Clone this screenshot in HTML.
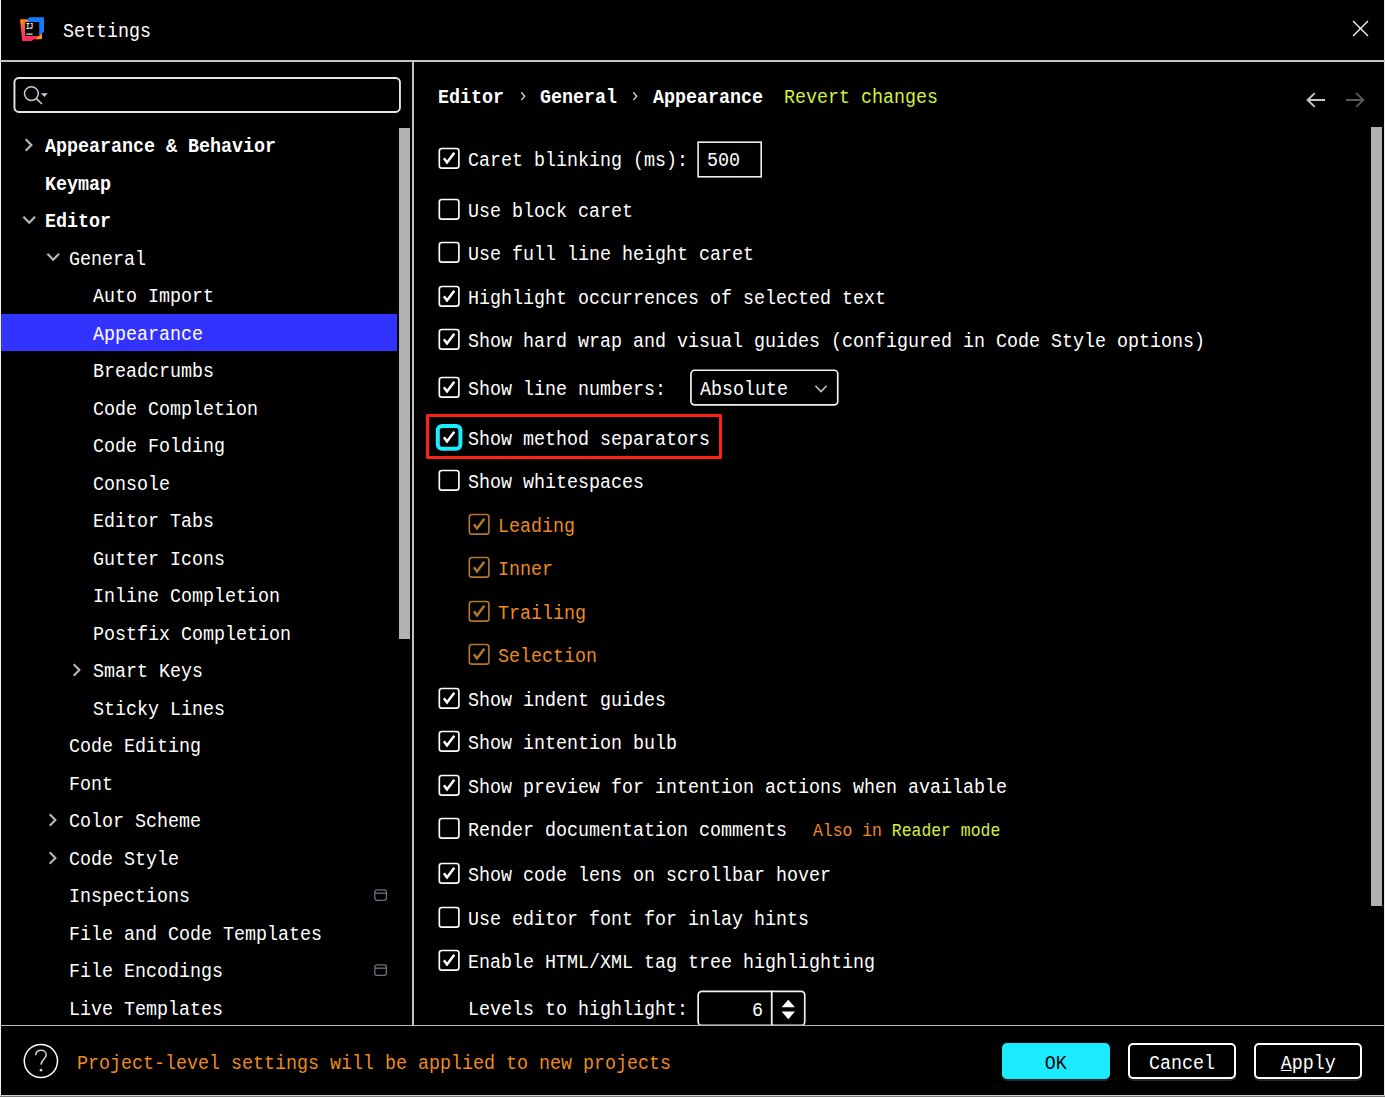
<!DOCTYPE html>
<html lang="en"><head><meta charset="utf-8"><title>Settings</title>
<style>
*{box-sizing:border-box;margin:0;padding:0}
html,body{width:1385px;height:1097px;background:#000;overflow:hidden}
body{position:relative;font-family:"Liberation Mono","DejaVu Sans Mono",monospace;font-size:19.5px;letter-spacing:0px;color:#fff;line-height:24px;-webkit-font-smoothing:antialiased}
.a{position:absolute}
.t{position:absolute;white-space:pre;height:24px;line-height:24px;transform:scaleX(0.94);transform-origin:0 0}
.btn span.s{display:inline-block;transform:scaleX(0.94);transform-origin:center}
.t{margin-left:-0.7px}
.b{font-weight:bold;margin-left:0}
.o{color:#ea8b22}
.g{color:#d2f23c}
.ln{position:absolute;background:#bdbdbd}
.cb{position:absolute;width:21px;height:21px;border:1.5px solid #fff;border-radius:3.5px}
.cb svg,.cbf svg{position:absolute;left:0;top:0}
.cbo{border-color:#a86a2a}
.cbf{position:absolute;width:27px;height:27px;border:4px solid #1aebff;border-radius:6px;background:#000}
.row{position:absolute;left:1px;width:396px;height:37px}
.btn{position:absolute;top:1043px;width:108px;height:36px;border-radius:5px;border:2px solid #fff;box-shadow:0 2px 0 #262626;text-align:center;line-height:38px}
</style></head><body>

<div class="ln" style="left:0;top:0;width:1px;height:1097px;background:#f2f2f2"></div>
<div class="ln" style="left:1384px;top:0;width:1px;height:1097px;background:#ececec"></div>
<div class="ln" style="left:0;top:1095px;width:1385px;height:1px;background:#d0d0d0"></div>
<div class="ln" style="left:0;top:1096px;width:1385px;height:1px;background:#7a7a7a"></div>
<div class="ln" style="left:0;top:60px;width:1385px;height:2px;background:#c6c6c6"></div>
<div class="ln" style="left:412px;top:62px;width:2px;height:963px;background:#c2c2c2"></div>
<div class="ln" style="left:0;top:1025px;width:1385px;height:1px;background:#bababa;z-index:3"></div>
<div class="a" style="left:1px;top:1026px;width:1383px;height:3px;background:#000;z-index:2"></div>
<svg class="a" style="left:20px;top:17px" width="24" height="24" viewBox="0 0 24 24">
<defs>
<linearGradient id="g1" x1="0.1" y1="0" x2="0.45" y2="1"><stop offset="0" stop-color="#ff8a12"/><stop offset="0.45" stop-color="#ff4a4a"/><stop offset="1" stop-color="#ff2368"/></linearGradient>
<linearGradient id="g2" x1="0.9" y1="0" x2="0.35" y2="1"><stop offset="0" stop-color="#0a84ff"/><stop offset="0.6" stop-color="#1878ff"/><stop offset="1" stop-color="#7a5ad8"/></linearGradient>
</defs>
<path d="M14.2 22.2 L21.2 22.2 Q22 22.2 22 21.4 L22 16 Z" fill="#ff8a10"/>
<path d="M1 2.3 L8 2.3 L22 16.6 L11.6 24 L3 24 Q2.2 24 2.1 23.2 L0.1 3.3 Q0 2.3 1 2.3 Z" fill="url(#g1)"/>
<path d="M9.6 0.2 L22.8 0.2 Q24 0.2 24 1.4 L24 14.2 Q24 14.9 23.4 15.3 L19.2 18.4 L7.4 3.4 L8.6 0.8 Q8.9 0.2 9.6 0.2 Z" fill="url(#g2)"/>
<rect x="5" y="5" width="14.2" height="14" fill="#000"/>
<rect x="6.3" y="16.4" width="6.3" height="1.5" fill="#c4c4c4"/>
<text x="6" y="12" font-family="Liberation Mono,monospace" font-weight="bold" font-size="8.6" textLength="7.2" lengthAdjust="spacingAndGlyphs" fill="#fff">IJ</text>
</svg>
<div class="t" style="left:63.3px;top:19.6px">Settings</div>
<svg class="a" style="left:1351px;top:19px" width="19" height="19" viewBox="0 0 19 19"><path d="M2 2 L17 17 M17 2 L2 17" stroke="#fff" stroke-width="1.3" fill="none"/></svg>
<svg class="a" style="left:11px;top:75px" width="393" height="41" viewBox="0 0 393 41"><rect x="3.45" y="2.95" width="385.50" height="34.00" rx="4.40" fill="none" stroke="#e6e6e6" stroke-width="1.90"/></svg>
<svg class="a" style="left:20px;top:82px" width="32" height="26" viewBox="0 0 32 26">
<circle cx="11.4" cy="11.6" r="6.9" fill="none" stroke="#c8cad0" stroke-width="1.5"/>
<path d="M16.4 16.6 L22 22" stroke="#c8cad0" stroke-width="1.6" fill="none"/>
<path d="M20.9 11.2 L27.8 11.2 L24.35 15 Z" fill="#c8cad0"/>
</svg>
<div class="row" style="top:314px;background:#3333ff"></div>
<svg class="a" style="left:23.40px;top:137.35px" width="12" height="16" viewBox="0 0 12 16"><path d="M2.7 2.2 L8.4 8 L2.7 13.8" fill="none" stroke="#b6b8ba" stroke-width="2.1"/></svg>
<div class="t b" style="left:45px;top:134.8px">Appearance &amp; Behavior</div>
<div class="t b" style="left:45px;top:172.8px">Keymap</div>
<svg class="a" style="left:21.15px;top:213.90px" width="17" height="12" viewBox="0 0 17 12"><path d="M2.4 2.75 L8.2 8.73 L14 2.75" fill="none" stroke="#b6b8ba" stroke-width="2.1"/></svg>
<div class="t b" style="left:45px;top:209.8px">Editor</div>
<svg class="a" style="left:45.10px;top:251.40px" width="17" height="12" viewBox="0 0 17 12"><path d="M2.4 2.75 L8.2 8.73 L14 2.75" fill="none" stroke="#b6b8ba" stroke-width="2.1"/></svg>
<div class="t" style="left:70px;top:247.8px">General</div>
<div class="t" style="left:94px;top:284.8px">Auto Import</div>
<div class="t" style="left:94px;top:322.8px">Appearance</div>
<div class="t" style="left:94px;top:359.8px">Breadcrumbs</div>
<div class="t" style="left:94px;top:397.8px">Code Completion</div>
<div class="t" style="left:94px;top:434.8px">Code Folding</div>
<div class="t" style="left:94px;top:472.8px">Console</div>
<div class="t" style="left:94px;top:509.8px">Editor Tabs</div>
<div class="t" style="left:94px;top:547.8px">Gutter Icons</div>
<div class="t" style="left:94px;top:584.8px">Inline Completion</div>
<div class="t" style="left:94px;top:622.8px">Postfix Completion</div>
<svg class="a" style="left:71.40px;top:662.35px" width="12" height="16" viewBox="0 0 12 16"><path d="M2.7 2.2 L8.4 8 L2.7 13.8" fill="none" stroke="#b6b8ba" stroke-width="2.1"/></svg>
<div class="t" style="left:94px;top:659.8px">Smart Keys</div>
<div class="t" style="left:94px;top:697.8px">Sticky Lines</div>
<div class="t" style="left:70px;top:734.8px">Code Editing</div>
<div class="t" style="left:70px;top:772.8px">Font</div>
<svg class="a" style="left:47.40px;top:812.35px" width="12" height="16" viewBox="0 0 12 16"><path d="M2.7 2.2 L8.4 8 L2.7 13.8" fill="none" stroke="#b6b8ba" stroke-width="2.1"/></svg>
<div class="t" style="left:70px;top:809.8px">Color Scheme</div>
<svg class="a" style="left:47.40px;top:849.85px" width="12" height="16" viewBox="0 0 12 16"><path d="M2.7 2.2 L8.4 8 L2.7 13.8" fill="none" stroke="#b6b8ba" stroke-width="2.1"/></svg>
<div class="t" style="left:70px;top:847.8px">Code Style</div>
<div class="t" style="left:70px;top:884.8px">Inspections</div>
<svg class="a" style="left:373px;top:888.2px" width="15" height="14" viewBox="0 0 15 14"><rect x="1.8" y="1.8" width="11.6" height="10.6" rx="2.3" fill="none" stroke="#6c707a" stroke-width="1.3"/><path d="M1.8 5.2 H13.4" stroke="#6c707a" stroke-width="1.3"/></svg>
<div class="t" style="left:70px;top:922.8px">File and Code Templates</div>
<div class="t" style="left:70px;top:959.8px">File Encodings</div>
<svg class="a" style="left:373px;top:963.2px" width="15" height="14" viewBox="0 0 15 14"><rect x="1.8" y="1.8" width="11.6" height="10.6" rx="2.3" fill="none" stroke="#6c707a" stroke-width="1.3"/><path d="M1.8 5.2 H13.4" stroke="#6c707a" stroke-width="1.3"/></svg>
<div class="t" style="left:70px;top:997.8px">Live Templates</div>
<div class="a" style="left:399px;top:128px;width:11px;height:511px;background:#b2b2b2"></div>
<div class="t b" style="left:438.3px;top:85.8px">Editor</div>
<div class="t b" style="left:540px;top:85.8px">General</div>
<div class="t b" style="left:653px;top:85.8px">Appearance</div>
<svg class="a" style="left:519.4px;top:90px" width="8" height="12" viewBox="0 0 8 12"><path d="M2.3 2.3 L5.7 6.2 L2.3 10.1" fill="none" stroke="#d0d2d8" stroke-width="1.35"/></svg>
<svg class="a" style="left:631.1px;top:90px" width="8" height="12" viewBox="0 0 8 12"><path d="M2.3 2.3 L5.7 6.2 L2.3 10.1" fill="none" stroke="#d0d2d8" stroke-width="1.35"/></svg>
<div class="t g" style="left:785px;top:85.8px">Revert changes</div>
<svg class="a" style="left:1305px;top:91px" width="22" height="18" viewBox="0 0 22 18"><path d="M20 9 H2.6 M9.8 2.1 L2.6 9 L9.8 15.9" fill="none" stroke="#c6c9ce" stroke-width="1.9"/></svg>
<svg class="a" style="left:1344px;top:91px" width="22" height="18" viewBox="0 0 22 18"><path d="M2 9 H19.4 M12.2 2.1 L19.4 9 L12.2 15.9" fill="none" stroke="#5a5a5a" stroke-width="1.9"/></svg>
<div class="a" style="left:1371px;top:127px;width:11px;height:779px;background:#b2b2b2"></div>
<div class="a" style="left:426px;top:414px;width:295.5px;height:44.5px;border:3px solid #fe2114;border-radius:1.5px"></div>
<svg class="a" style="left:434px;top:143px" width="30" height="30" viewBox="0 0 30 30"><rect x="5.33" y="5.52" width="19.55" height="19.65" rx="2.5" fill="none" stroke="#fff" stroke-width="1.65"/><path d="M9.90 15.30 L13.00 19.50 L20.30 9.70" fill="none" stroke="#fff" stroke-width="2.5"/></svg>
<div class="t" style="left:469.0px;top:148.6px">Caret blinking (ms):</div>
<svg class="a" style="left:434px;top:194px" width="30" height="30" viewBox="0 0 30 30"><rect x="5.33" y="5.52" width="19.55" height="19.65" rx="2.5" fill="none" stroke="#fff" stroke-width="1.65"/></svg>
<div class="t" style="left:469.0px;top:199.6px">Use block caret</div>
<svg class="a" style="left:434px;top:237px" width="30" height="30" viewBox="0 0 30 30"><rect x="5.33" y="5.52" width="19.55" height="19.65" rx="2.5" fill="none" stroke="#fff" stroke-width="1.65"/></svg>
<div class="t" style="left:469.0px;top:242.6px">Use full line height caret</div>
<svg class="a" style="left:434px;top:281px" width="30" height="30" viewBox="0 0 30 30"><rect x="5.33" y="5.52" width="19.55" height="19.65" rx="2.5" fill="none" stroke="#fff" stroke-width="1.65"/><path d="M9.90 15.30 L13.00 19.50 L20.30 9.70" fill="none" stroke="#fff" stroke-width="2.5"/></svg>
<div class="t" style="left:469.0px;top:286.6px">Highlight occurrences of selected text</div>
<svg class="a" style="left:434px;top:324px" width="30" height="30" viewBox="0 0 30 30"><rect x="5.33" y="5.52" width="19.55" height="19.65" rx="2.5" fill="none" stroke="#fff" stroke-width="1.65"/><path d="M9.90 15.30 L13.00 19.50 L20.30 9.70" fill="none" stroke="#fff" stroke-width="2.5"/></svg>
<div class="t" style="left:469.0px;top:329.6px">Show hard wrap and visual guides (configured in Code Style options)</div>
<svg class="a" style="left:434px;top:372px" width="30" height="30" viewBox="0 0 30 30"><rect x="5.33" y="5.52" width="19.55" height="19.65" rx="2.5" fill="none" stroke="#fff" stroke-width="1.65"/><path d="M9.90 15.30 L13.00 19.50 L20.30 9.70" fill="none" stroke="#fff" stroke-width="2.5"/></svg>
<div class="t" style="left:469.0px;top:377.6px">Show line numbers:</div>
<svg class="a" style="left:434px;top:422px" width="30" height="30" viewBox="0 0 30 30"><rect x="3.80" y="3.90" width="22.6" height="22.8" rx="4.2" fill="#000" stroke="#1aebff" stroke-width="4"/><path d="M9.90 15.30 L13.00 19.50 L20.30 9.70" fill="none" stroke="#fff" stroke-width="2.5"/></svg>
<div class="t" style="left:469.0px;top:427.6px">Show method separators</div>
<svg class="a" style="left:434px;top:465px" width="30" height="30" viewBox="0 0 30 30"><rect x="5.33" y="5.52" width="19.55" height="19.65" rx="2.5" fill="none" stroke="#fff" stroke-width="1.65"/></svg>
<div class="t" style="left:469.0px;top:470.6px">Show whitespaces</div>
<svg class="a" style="left:464px;top:509px" width="30" height="30" viewBox="0 0 30 30"><rect x="5.33" y="5.53" width="19.55" height="19.65" rx="2.5" fill="none" stroke="#b2762c" stroke-width="1.65"/><path d="M9.90 15.30 L13.00 19.50 L20.30 9.70" fill="none" stroke="#b2762c" stroke-width="2.5"/></svg>
<div class="t o" style="left:499.0px;top:514.6px">Leading</div>
<svg class="a" style="left:464px;top:552px" width="30" height="30" viewBox="0 0 30 30"><rect x="5.33" y="5.53" width="19.55" height="19.65" rx="2.5" fill="none" stroke="#b2762c" stroke-width="1.65"/><path d="M9.90 15.30 L13.00 19.50 L20.30 9.70" fill="none" stroke="#b2762c" stroke-width="2.5"/></svg>
<div class="t o" style="left:499.0px;top:557.6px">Inner</div>
<svg class="a" style="left:464px;top:596px" width="30" height="30" viewBox="0 0 30 30"><rect x="5.33" y="5.53" width="19.55" height="19.65" rx="2.5" fill="none" stroke="#b2762c" stroke-width="1.65"/><path d="M9.90 15.30 L13.00 19.50 L20.30 9.70" fill="none" stroke="#b2762c" stroke-width="2.5"/></svg>
<div class="t o" style="left:499.0px;top:601.6px">Trailing</div>
<svg class="a" style="left:464px;top:639px" width="30" height="30" viewBox="0 0 30 30"><rect x="5.33" y="5.53" width="19.55" height="19.65" rx="2.5" fill="none" stroke="#b2762c" stroke-width="1.65"/><path d="M9.90 15.30 L13.00 19.50 L20.30 9.70" fill="none" stroke="#b2762c" stroke-width="2.5"/></svg>
<div class="t o" style="left:499.0px;top:644.6px">Selection</div>
<svg class="a" style="left:434px;top:683px" width="30" height="30" viewBox="0 0 30 30"><rect x="5.33" y="5.53" width="19.55" height="19.65" rx="2.5" fill="none" stroke="#fff" stroke-width="1.65"/><path d="M9.90 15.30 L13.00 19.50 L20.30 9.70" fill="none" stroke="#fff" stroke-width="2.5"/></svg>
<div class="t" style="left:469.0px;top:688.6px">Show indent guides</div>
<svg class="a" style="left:434px;top:726px" width="30" height="30" viewBox="0 0 30 30"><rect x="5.33" y="5.53" width="19.55" height="19.65" rx="2.5" fill="none" stroke="#fff" stroke-width="1.65"/><path d="M9.90 15.30 L13.00 19.50 L20.30 9.70" fill="none" stroke="#fff" stroke-width="2.5"/></svg>
<div class="t" style="left:469.0px;top:731.6px">Show intention bulb</div>
<svg class="a" style="left:434px;top:770px" width="30" height="30" viewBox="0 0 30 30"><rect x="5.33" y="5.53" width="19.55" height="19.65" rx="2.5" fill="none" stroke="#fff" stroke-width="1.65"/><path d="M9.90 15.30 L13.00 19.50 L20.30 9.70" fill="none" stroke="#fff" stroke-width="2.5"/></svg>
<div class="t" style="left:469.0px;top:775.6px">Show preview for intention actions when available</div>
<svg class="a" style="left:434px;top:813px" width="30" height="30" viewBox="0 0 30 30"><rect x="5.33" y="5.53" width="19.55" height="19.65" rx="2.5" fill="none" stroke="#fff" stroke-width="1.65"/></svg>
<div class="t" style="left:469.0px;top:818.6px">Render documentation comments</div>
<svg class="a" style="left:434px;top:858px" width="30" height="30" viewBox="0 0 30 30"><rect x="5.33" y="5.53" width="19.55" height="19.65" rx="2.5" fill="none" stroke="#fff" stroke-width="1.65"/><path d="M9.90 15.30 L13.00 19.50 L20.30 9.70" fill="none" stroke="#fff" stroke-width="2.5"/></svg>
<div class="t" style="left:469.0px;top:863.6px">Show code lens on scrollbar hover</div>
<svg class="a" style="left:434px;top:902px" width="30" height="30" viewBox="0 0 30 30"><rect x="5.33" y="5.53" width="19.55" height="19.65" rx="2.5" fill="none" stroke="#fff" stroke-width="1.65"/></svg>
<div class="t" style="left:469.0px;top:907.6px">Use editor font for inlay hints</div>
<svg class="a" style="left:434px;top:945px" width="30" height="30" viewBox="0 0 30 30"><rect x="5.33" y="5.53" width="19.55" height="19.65" rx="2.5" fill="none" stroke="#fff" stroke-width="1.65"/><path d="M9.90 15.30 L13.00 19.50 L20.30 9.70" fill="none" stroke="#fff" stroke-width="2.5"/></svg>
<div class="t" style="left:469.0px;top:950.6px">Enable HTML/XML tag tree highlighting</div>
<svg class="a" style="left:695px;top:139px" width="71" height="42" viewBox="0 0 71 42"><rect x="3.10" y="3.20" width="63.10" height="34.60" rx="0.00" fill="none" stroke="#f0f0f0" stroke-width="1.60"/></svg>
<div class="t" style="left:707.9px;top:148.8px">500</div>
<svg class="a" style="left:688px;top:367px" width="154" height="42" viewBox="0 0 154 42"><rect x="2.95" y="3.25" width="146.80" height="34.60" rx="3.60" fill="none" stroke="#f0f0f0" stroke-width="1.70"/></svg>
<div class="t" style="left:700.6px;top:378.1px">Absolute</div>
<svg class="a" style="left:813px;top:383px" width="16" height="12" viewBox="0 0 16 12"><path d="M2.4 2.8 L8 8.6 L13.6 2.8" fill="none" stroke="#c4c7ce" stroke-width="1.5"/></svg>
<div class="t" style="left:813.6px;top:819.3px;font-size:17.48px"><span class="o">Also in</span> <span class="g">Reader mode</span></div>
<div class="t" style="left:468.5px;top:998.1px">Levels to highlight:</div>
<svg class="a" style="left:695px;top:988px" width="114" height="42" viewBox="0 0 114 42"><rect x="3.15" y="3.35" width="106.60" height="34.10" rx="3.80" fill="none" stroke="#f0f0f0" stroke-width="1.70"/><path d="M76.75 2.6 V38.2" stroke="#f0f0f0" stroke-width="1.8"/></svg>
<div class="t" style="left:752.9px;top:998.8px">6</div>
<svg class="a" style="left:779px;top:997px" width="18" height="26" viewBox="0 0 18 26"><path d="M2.6 10.3 L9.3 2.7 L16 10.3 Z M2.6 14.6 L16 14.6 L9.3 22.2 Z" fill="#fff"/></svg>
<svg class="a" style="left:22px;top:1042px" width="38" height="38" viewBox="0 0 38 38"><circle cx="18.9" cy="19" r="16.6" fill="none" stroke="#fff" stroke-width="1.5"/>
<path d="M13.7 13.2 C13.9 9.6 16.2 8.3 18.9 8.3 C21.9 8.3 24.2 10.1 24.2 12.8 C24.2 16.6 19.4 17.6 19.1 22.6" fill="none" stroke="#ced0d6" stroke-width="1.6"/><circle cx="19" cy="28.2" r="1.35" fill="#ced0d6"/></svg>
<div class="t o" style="left:77.5px;top:1052.1px">Project-level settings will be applied to new projects</div>
<div class="btn" style="left:1002px;background:#1aebff;border-color:#1aebff;color:#000"><span class="s">OK</span></div>
<div class="btn" style="left:1128px"><span class="s">Cancel</span></div>
<div class="btn" style="left:1254px"><span class="s"><span style="text-decoration:underline;text-underline-offset:1px">A</span>pply</span></div>
</body></html>
